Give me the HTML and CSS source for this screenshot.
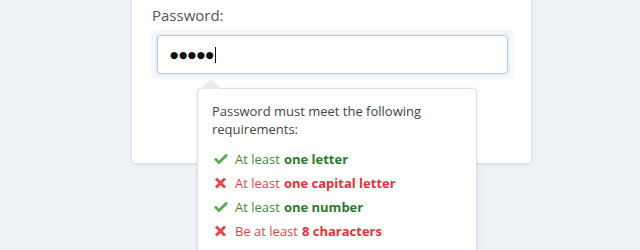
FILE: index.html
```html
<!DOCTYPE html>
<html>
<head>
<meta charset="utf-8">
<link rel="stylesheet" href="styles.css">
</head>
<body>
<div class="card">
  <label class="label">Password:</label>
  <div class="field-wrap">
    <div class="input"><span class="dots">&#9679;&#9679;&#9679;&#9679;&#9679;</span><span class="caret"></span></div>
  </div>
  <div class="popover">
    <span class="arrow"></span>
    <p class="intro">Password must meet the following requirements:</p>
    <ul class="rules">
      <li class="ok"><svg class="ico" viewBox="0 0 16 12" width="16" height="12"><path d="M1 6.5 L3 4.5 L6 7.5 L13 0.8 L15 2.8 L6 11.5 Z" fill="#5aae4f"/></svg>At least <b>one letter</b></li>
      <li class="bad"><svg class="ico" viewBox="0 0 16 14" width="16" height="14"><path d="M2 3.5 L4 1.5 L7.5 5 L11 1.5 L13 3.5 L9.5 7 L13 10.5 L11 12.5 L7.5 9 L4 12.5 L2 10.5 L5.5 7 Z" fill="#e8454a"/></svg>At least <b>one capital letter</b></li>
      <li class="ok"><svg class="ico" viewBox="0 0 16 12" width="16" height="12"><path d="M1 6.5 L3 4.5 L6 7.5 L13 0.8 L15 2.8 L6 11.5 Z" fill="#5aae4f"/></svg>At least <b>one number</b></li>
      <li class="bad"><svg class="ico" viewBox="0 0 16 14" width="16" height="14"><path d="M2 3.5 L4 1.5 L7.5 5 L11 1.5 L13 3.5 L9.5 7 L13 10.5 L11 12.5 L7.5 9 L4 12.5 L2 10.5 L5.5 7 Z" fill="#e8454a"/></svg>Be at least <b>8 characters</b></li>
    </ul>
  </div>
</div>
</body>
</html>
```
FILE: styles.css
```css
html, body {
  margin: 0;
  padding: 0;
}
body {
  background: #eef1f5;
  font-family: "Open Sans", "DejaVu Sans", sans-serif;
  height: 250px;
  overflow: hidden;
}
.card {
  position: relative;
  margin-left: 131px;
  width: 401px;
  height: 164px;
  box-sizing: border-box;
  background: #fff;
  border: 1px solid #dfe3e8;
  border-top: none;
  border-radius: 0 0 5px 5px;
  box-shadow: 0 1px 2px rgba(0,0,0,0.08);
  padding-top: 5px;
}
.label {
  display: block;
  margin-left: 20px;
  font-size: 15px;
  line-height: 20px;
  color: #555;
}
.field-wrap {
  margin: 5px 0 0 19px;
  width: 363px;
  padding: 5px 6px;
  box-sizing: border-box;
  background: #f6f7f9;
  border-radius: 4px;
}
.input {
  height: 39px;
  box-sizing: border-box;
  border: 1px solid #aed0ea;
  border-radius: 4px;
  background: #fff;
  box-shadow: 0 0 3px rgba(120,170,220,0.35);
  display: flex;
  align-items: center;
  padding-left: 12px;
}
.dots {
  font-family: "DejaVu Sans", sans-serif;
  font-size: 9.5px;
  letter-spacing: 0.6px;
  color: #111;
}
.caret {
  display: inline-block;
  width: 1px;
  height: 16px;
  background: #111;
  margin-left: 1px;
}
.popover {
  position: absolute;
  left: 65px;
  top: 88px;
  width: 280px;
  height: 190px;
  box-sizing: border-box;
  background: #fff;
  border: 1px solid #dcdfe3;
  border-radius: 4px;
  box-shadow: 0 1px 4px rgba(0,0,0,0.10);
  padding: 13px 14px 0 14px;
}
.arrow {
  position: absolute;
  left: 3px;
  top: -10px;
  width: 0;
  height: 0;
  border-left: 10px solid transparent;
  border-right: 10px solid transparent;
  border-bottom: 10px solid #e8eaed;
}
.intro {
  margin: 0;
  font-size: 13px;
  line-height: 18px;
  color: #444;
  width: 230px;
}
.rules {
  list-style: none;
  margin: 9px 0 0 0;
  padding: 0;
}
.rules li {
  display: flex;
  align-items: center;
  font-size: 13px;
  line-height: 24px;
  height: 24px;
}
.rules b {
  font-weight: 700;
  margin-left: 4px;
}
.ico {
  flex: none;
  margin-right: 6px;
  margin-left: 1px;
}
.ok { color: #3f8a3b; }
.ok b { color: #2f7a2c; }
.bad { color: #ea3f48; }
.bad b { color: #e5323c; }
```
